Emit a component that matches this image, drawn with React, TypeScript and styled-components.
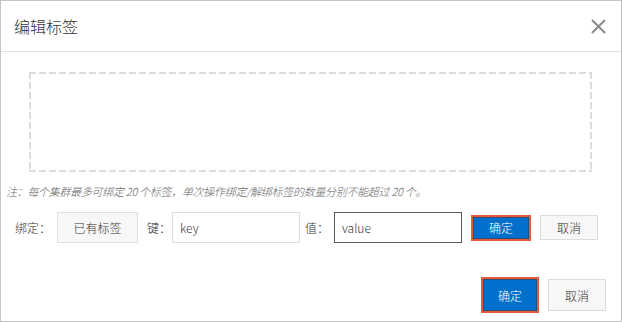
import styled, { createGlobalStyle } from "styled-components";

const GlobalStyle = createGlobalStyle`
  html, body {
    margin: 0;
    padding: 0;
    background: #fff;
  }
  body {
    font-family: "Noto Sans CJK SC", "Noto Sans", "Liberation Sans", sans-serif;
    font-size: 12px;
    font-weight: 300;
    color: #333;
  }
`;

const Dialog = styled.div`
  width: 622px;
  height: 322px;
  box-sizing: border-box;
  border: 1px solid #c4c4c4;
  display: flex;
  flex-direction: column;
  background: #fff;
`;

const Header = styled.div`
  height: 50px;
  border-bottom: 1px solid #e1e1e1;
  display: flex;
  align-items: center;
  justify-content: space-between;
  padding: 0 15px 0 13px;
  flex-shrink: 0;
`;

const Title = styled.h2`
  margin: 0;
  font-size: 16px;
  font-weight: 300;
  color: #333;
`;

const CloseButton = styled.button`
  border: 0;
  background: none;
  padding: 0;
  width: 16px;
  height: 16px;
  display: flex;
  align-items: center;
  justify-content: center;
  cursor: pointer;
`;

const Body = styled.div`
  flex: 1;
  display: flex;
  flex-direction: column;
  padding-top: 20px;
`;

// dashed area, drawn with gradients to get the 7px on / 3px off dash
const TagArea = styled.div`
  height: 100px;
  margin: 0 29px 0 28px;
  background:
    repeating-linear-gradient(90deg, #dcdcdc 0 7px, transparent 7px 10px) top left / 100% 2px no-repeat,
    repeating-linear-gradient(90deg, #dcdcdc 0 7px, transparent 7px 10px) bottom left / 100% 2px no-repeat,
    repeating-linear-gradient(180deg, #dcdcdc 0 7px, transparent 7px 10px) top left / 2px 100% no-repeat,
    repeating-linear-gradient(180deg, #dcdcdc 0 7px, transparent 7px 10px) top right / 2px 100% no-repeat;
`;

const Note = styled.p`
  margin: 10px 0 0 5px;
  font-size: 11px;
  letter-spacing: -0.3px;
  font-style: italic;
  color: #666;
  line-height: 18px;
`;

const Row = styled.div`
  display: flex;
  align-items: center;
  margin-top: 12px;
  padding-left: 14px;
  height: 31px;
`;

const Label = styled.span<{ $w: number; $ml?: number }>`
  width: ${(p) => p.$w}px;
  margin-left: ${(p) => p.$ml ?? 0}px;
  flex-shrink: 0;
  color: #333;
`;

const TagButton = styled.button`
  width: 81px;
  height: 31px;
  box-sizing: border-box;
  border: 1px solid #e0e0e0;
  background: #f7f7f7;
  color: #333;
  font: inherit;
  margin-right: 9px;
`;

const Input = styled.input<{ $active?: boolean }>`
  width: 128px;
  height: 31px;
  box-sizing: border-box;
  border: 1px solid ${(p) => (p.$active ? "#5a5a5a" : "#dcdcdc")};
  padding: 0 7px;
  font: inherit;
  color: #333;
  outline: none;
`;

const PrimaryButton = styled.button<{ $w: number; $h: number; $ml?: number }>`
  width: ${(p) => p.$w}px;
  height: ${(p) => p.$h}px;
  margin-left: ${(p) => p.$ml ?? 0}px;
  box-sizing: border-box;
  background: #0070cc;
  border: 1px solid #2b4e74;
  outline: 2px solid #e8583c;
  color: #fff;
  font: inherit;
  padding: 0;
`;

const GhostButton = styled.button<{ $w: number; $h: number; $ml?: number }>`
  width: ${(p) => p.$w}px;
  height: ${(p) => p.$h}px;
  margin-left: ${(p) => p.$ml ?? 0}px;
  box-sizing: border-box;
  background: #f7f7f7;
  border: 1px solid #dcdcdc;
  color: #333;
  font: inherit;
  padding: 0;
`;

const Footer = styled.div`
  margin-top: auto;
  display: flex;
  justify-content: flex-end;
  align-items: center;
  padding: 0 15px 10px 0;
`;

function App() {
  return (
    <>
      <GlobalStyle />
      <Dialog>
        <Header>
          <Title>编辑标签</Title>
          <CloseButton aria-label="close">
            <svg width="15" height="15" viewBox="0 0 15 15">
              <path d="M1 1L14 14M14 1L1 14" stroke="#8a8a8a" strokeWidth="2" />
            </svg>
          </CloseButton>
        </Header>
        <Body>
          <TagArea />
          <Note>注：每个集群最多可绑定 20 个标签，单次操作绑定/解绑标签的数量分别不能超过 20 个。</Note>
          <Row>
            <Label $w={42}>绑定：</Label>
            <TagButton>已有标签</TagButton>
            <Label $w={25}>键：</Label>
            <Input defaultValue="key" />
            <Label $w={29} $ml={5}>值：</Label>
            <Input $active defaultValue="value" />
            <PrimaryButton $w={56} $h={22} $ml={11}>确定</PrimaryButton>
            <GhostButton $w={58} $h={25} $ml={11}>取消</GhostButton>
          </Row>
          <Footer>
            <PrimaryButton $w={54} $h={32}>确定</PrimaryButton>
            <GhostButton $w={58} $h={32} $ml={11}>取消</GhostButton>
          </Footer>
        </Body>
      </Dialog>
    </>
  );
}

export default App;
